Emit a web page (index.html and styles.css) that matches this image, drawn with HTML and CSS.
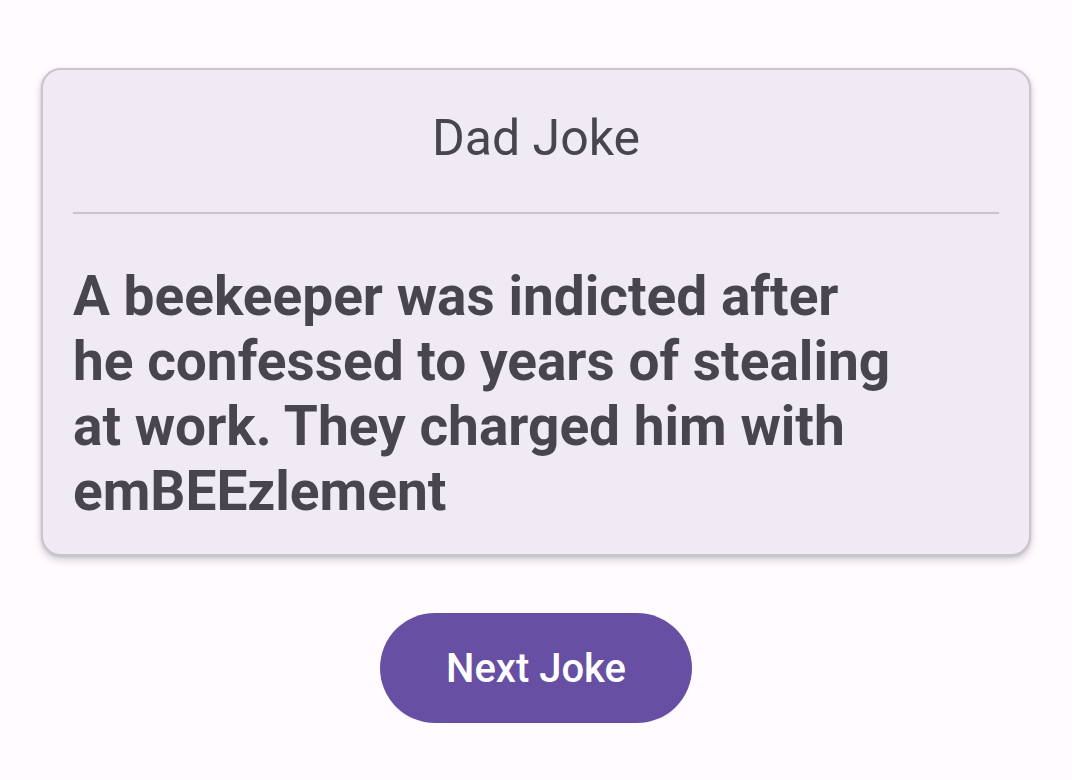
FILE: index.html
```html
<!DOCTYPE html>
<html>
<head>
<meta charset="utf-8">
<link rel="stylesheet" href="styles.css">
</head>
<body>
<main class="screen">
  <section class="card">
    <h1 class="card-title">Dad Joke</h1>
    <hr class="divider">
    <p class="joke">A beekeeper was indicted after<br>he confessed to years of stealing<br>at work. They charged him with<br>emBEEzlement</p>
  </section>
  <button class="next-btn">Next Joke</button>
</main>
</body>
</html>
```

FILE: styles.css
```css
* { box-sizing: border-box; }
html, body {
  margin: 0;
  padding: 0;
  background: #fffbfe;
  font-family: Roboto, "Noto Sans", sans-serif;
}
.screen {
  width: 1072px;
  height: 780px;
  display: flex;
  flex-direction: column;
  align-items: center;
  padding-top: 68px;
}
.card {
  width: 990px;
  height: 488px;
  background: #efeaf4;
  border: 2px solid #cac4d0;
  border-radius: 20px;
  box-shadow: 0 4px 8px rgba(0,0,0,0.18), 0 1px 3px rgba(0,0,0,0.12);
  padding: 0 30px;
  display: flex;
  flex-direction: column;
}
.card-title {
  margin: 0;
  height: 142px;
  display: flex;
  align-items: center;
  justify-content: center;
  font-size: 50px;
  font-weight: 400;
  color: #49454f;
  padding-bottom: 6px;
}
.divider {
  margin: 0;
  border: none;
  height: 2px;
  background: #cac4d0;
}
.joke {
  margin: 50px 0 0 0;
  font-size: 55px;
  font-weight: 700;
  line-height: 65px;
  color: #49454f;
}
.next-btn {
  margin-top: 57px;
  width: 312px;
  height: 110px;
  border: none;
  border-radius: 55px;
  background: #6750a4;
  color: #ffffff;
  font-family: Roboto, "Noto Sans", sans-serif;
  font-size: 40px;
  font-weight: 500;
}
```
